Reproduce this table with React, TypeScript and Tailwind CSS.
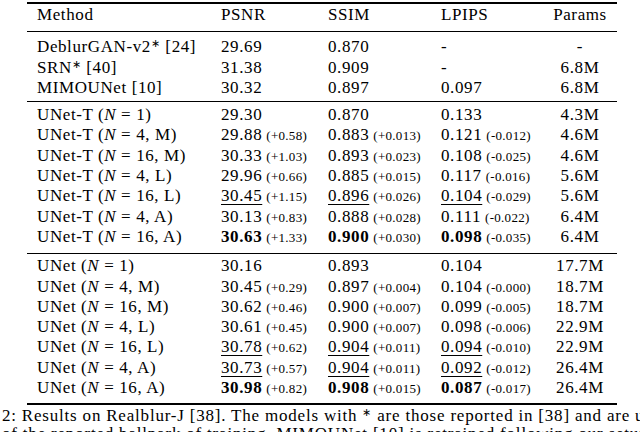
import React from 'react'

type Cell = { v: string; d?: string; b?: boolean; u?: boolean }
type RowData = { name: React.ReactNode; cells: Cell[]; params: string }

const eq = (model: string, n: string, k?: string) => (
  <>
    {model} (<i>N</i> = {n}
    {k ? `, ${k}` : ''})
  </>
)

const c = (v: string, d?: string, flag?: 'b' | 'u'): Cell => ({
  v,
  d,
  b: flag === 'b',
  u: flag === 'u',
})

const Star = () => <sup className="text-[11px] -top-[5px]">∗</sup>

const baselines: RowData[] = [
  {
    name: (
      <>
        DeblurGAN-v2<Star /> [24]
      </>
    ),
    cells: [c('29.69'), c('0.870'), c('-')],
    params: '-',
  },
  {
    name: (
      <>
        SRN<Star /> [40]
      </>
    ),
    cells: [c('31.38'), c('0.909'), c('-')],
    params: '6.8M',
  },
  { name: 'MIMOUNet [10]', cells: [c('30.32'), c('0.897'), c('0.097')], params: '6.8M' },
]

const tiny: RowData[] = [
  { name: eq('UNet-T', '1'), cells: [c('29.30'), c('0.870'), c('0.133')], params: '4.3M' },
  {
    name: eq('UNet-T', '4', 'M'),
    cells: [c('29.88', '(+0.58)'), c('0.883', '(+0.013)'), c('0.121', '(-0.012)')],
    params: '4.6M',
  },
  {
    name: eq('UNet-T', '16', 'M'),
    cells: [c('30.33', '(+1.03)'), c('0.893', '(+0.023)'), c('0.108', '(-0.025)')],
    params: '4.6M',
  },
  {
    name: eq('UNet-T', '4', 'L'),
    cells: [c('29.96', '(+0.66)'), c('0.885', '(+0.015)'), c('0.117', '(-0.016)')],
    params: '5.6M',
  },
  {
    name: eq('UNet-T', '16', 'L'),
    cells: [c('30.45', '(+1.15)', 'u'), c('0.896', '(+0.026)', 'u'), c('0.104', '(-0.029)', 'u')],
    params: '5.6M',
  },
  {
    name: eq('UNet-T', '4', 'A'),
    cells: [c('30.13', '(+0.83)'), c('0.888', '(+0.028)'), c('0.111', '(-0.022)')],
    params: '6.4M',
  },
  {
    name: eq('UNet-T', '16', 'A'),
    cells: [c('30.63', '(+1.33)', 'b'), c('0.900', '(+0.030)', 'b'), c('0.098', '(-0.035)', 'b')],
    params: '6.4M',
  },
]

const full: RowData[] = [
  { name: eq('UNet', '1'), cells: [c('30.16'), c('0.893'), c('0.104')], params: '17.7M' },
  {
    name: eq('UNet', '4', 'M'),
    cells: [c('30.45', '(+0.29)'), c('0.897', '(+0.004)'), c('0.104', '(-0.000)')],
    params: '18.7M',
  },
  {
    name: eq('UNet', '16', 'M'),
    cells: [c('30.62', '(+0.46)'), c('0.900', '(+0.007)'), c('0.099', '(-0.005)')],
    params: '18.7M',
  },
  {
    name: eq('UNet', '4', 'L'),
    cells: [c('30.61', '(+0.45)'), c('0.900', '(+0.007)'), c('0.098', '(-0.006)')],
    params: '22.9M',
  },
  {
    name: eq('UNet', '16', 'L'),
    cells: [c('30.78', '(+0.62)', 'u'), c('0.904', '(+0.011)', 'u'), c('0.094', '(-0.010)', 'u')],
    params: '22.9M',
  },
  {
    name: eq('UNet', '4', 'A'),
    cells: [c('30.73', '(+0.57)', 'u'), c('0.904', '(+0.011)', 'u'), c('0.092', '(-0.012)', 'u')],
    params: '26.4M',
  },
  {
    name: eq('UNet', '16', 'A'),
    cells: [c('30.98', '(+0.82)', 'b'), c('0.908', '(+0.015)', 'b'), c('0.087', '(-0.017)', 'b')],
    params: '26.4M',
  },
]

const cols = 'grid grid-cols-[184px_107px_113px_112px_54px] h-[20.3px] leading-[20.3px] whitespace-nowrap'

const Row = ({ row }: { row: RowData }) => (
  <div className={cols}>
    <div>{row.name}</div>
    {row.cells.map((cell, i) => (
      <div key={i}>
        <span
          className={
            (cell.b ? 'font-bold ' : '') +
            (cell.u ? 'underline decoration-1 underline-offset-[3px]' : '')
          }
        >
          {cell.v}
        </span>
        {cell.d && <span className="ml-[4px] text-[13px] tracking-[0.3px]">{cell.d}</span>}
      </div>
    ))}
    <div className="text-center">{row.params}</div>
  </div>
)

const Group = ({ rows, pad }: { rows: RowData[]; pad: string }) => (
  <div className={'pl-[10px] ' + pad}>
    {rows.map((r, i) => (
      <Row key={i} row={r} />
    ))}
  </div>
)

export default function App() {
  return (
    <div className="w-[640px] h-[432px] overflow-hidden bg-white text-black [font-family:'Liberation_Serif',serif] text-[17px] tracking-[0.6px]">
      <div className="ml-[27px] w-[590px] pt-[2px]">
        <div className="h-[2px] bg-black" />
        <div className={'pl-[10px] pt-[1px] pb-[6px] ' + cols + ' box-content'}>
          <div>Method</div>
          <div>PSNR</div>
          <div>SSIM</div>
          <div>LPIPS</div>
          <div className="text-center">Params</div>
        </div>
        <div className="h-px bg-black" />
        <Group rows={baselines} pad="pt-[5px] pb-[3px]" />
        <div className="h-px bg-black" />
        <Group rows={tiny} pad="pt-[3px] pb-[6px]" />
        <div className="h-px bg-black" />
        <Group rows={full} pad="pt-[2px] pb-[5px]" />
        <div className="h-[2px] bg-black" />
      </div>
      <div className="pl-[2px] pt-[2px] whitespace-nowrap leading-[18px] tracking-[0.8px]">
        <p>
          2: Results on Realblur-J [38]. The models with <Star /> are those reported in [38] and are using the
          released weights.
        </p>
        <p>of the reported ballpark of training. MIMOUNet [10] is retrained following our setup for fairness.</p>
      </div>
    </div>
  )
}
